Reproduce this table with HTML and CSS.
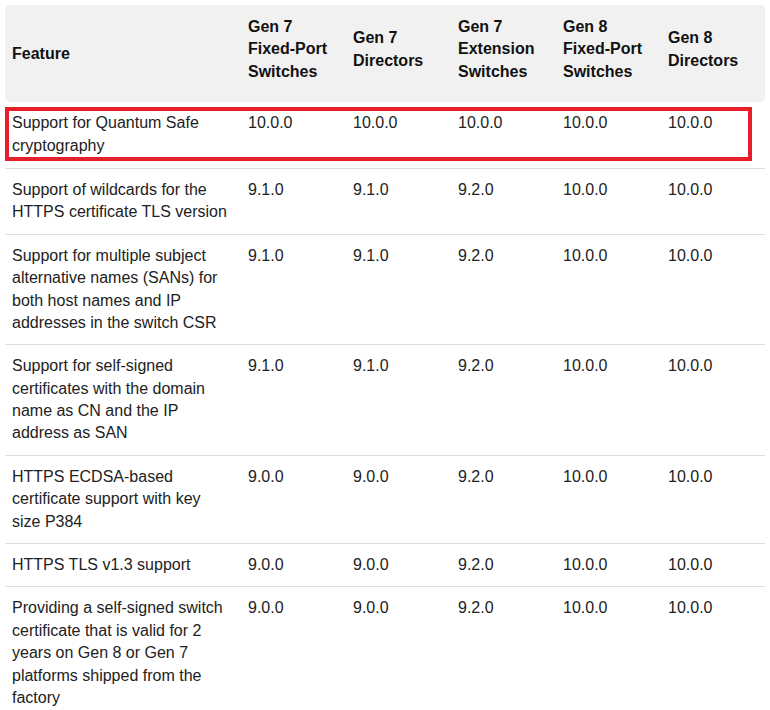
FILE: index.html
```html
<!DOCTYPE html>
<html>
<head>
<meta charset="utf-8">
<link rel="stylesheet" href="styles.css">
</head>
<body>
<div class="wrap">
<table class="tbl">
<colgroup>
<col class="c-feat"><col class="c-v"><col class="c-v"><col class="c-v"><col class="c-v"><col class="c-last">
</colgroup>
<thead>
<tr>
<th class="feat">Feature</th>
<th>Gen 7 Fixed-Port Switches</th>
<th>Gen 7 Directors</th>
<th>Gen 7 Extension Switches</th>
<th>Gen 8 Fixed-Port Switches</th>
<th>Gen 8 Directors</th>
</tr>
</thead>
<tbody>
<tr><td>Support for Quantum Safe cryptography</td><td>10.0.0</td><td>10.0.0</td><td>10.0.0</td><td>10.0.0</td><td>10.0.0</td></tr>
<tr><td>Support of wildcards for the HTTPS certificate TLS version</td><td>9.1.0</td><td>9.1.0</td><td>9.2.0</td><td>10.0.0</td><td>10.0.0</td></tr>
<tr><td>Support for multiple subject alternative names (SANs) for both host names and IP addresses in the switch CSR</td><td>9.1.0</td><td>9.1.0</td><td>9.2.0</td><td>10.0.0</td><td>10.0.0</td></tr>
<tr><td>Support for self-signed certificates with the domain name as CN and the IP address as SAN</td><td>9.1.0</td><td>9.1.0</td><td>9.2.0</td><td>10.0.0</td><td>10.0.0</td></tr>
<tr><td>HTTPS ECDSA-based certificate support with key size P384</td><td>9.0.0</td><td>9.0.0</td><td>9.2.0</td><td>10.0.0</td><td>10.0.0</td></tr>
<tr><td>HTTPS TLS v1.3 support</td><td>9.0.0</td><td>9.0.0</td><td>9.2.0</td><td>10.0.0</td><td>10.0.0</td></tr>
<tr><td>Providing a self-signed switch certificate that is valid for 2 years on Gen 8 or Gen 7 platforms shipped from the factory</td><td>9.0.0</td><td>9.0.0</td><td>9.2.0</td><td>10.0.0</td><td>10.0.0</td></tr>
</tbody>
</table>
<div class="highlight"></div>
</div>
</body>
</html>
```

FILE: styles.css
```css
html, body {
  margin: 0;
  padding: 0;
  background: #ffffff;
}
body {
  padding: 5px 5px 0 5px;
  font-family: "Liberation Sans", Arial, sans-serif;
  font-size: 16px;
  line-height: 1.4;
  color: #222222;
}
.wrap {
  position: relative;
}
.tbl {
  width: 760px;
  table-layout: fixed;
  border-collapse: separate;
  border-spacing: 0;
}
.c-feat { width: 236px; }
.c-v { width: 105px; }
.c-last { width: 104px; }
.tbl th {
  background: #f1f1f1;
  color: #111111;
  font-weight: bold;
  text-align: left;
  vertical-align: middle;
  padding: 11px 7px 19px 7px;
}
.tbl th:first-child { border-radius: 5px 0 0 5px; }
.tbl th:last-child { border-radius: 0 5px 5px 0; }
.tbl th.feat { padding-top: 21px; }
.tbl td {
  text-align: left;
  vertical-align: top;
  padding: 10px 7px 10px 7px;
  border-bottom: 1px solid #dddddd;
}
.tbl td:first-child { padding-right: 11px; }
.tbl tbody tr:first-child td { padding-top: 10px; padding-bottom: 11px; }
.highlight {
  position: absolute;
  left: 0;
  top: 102px;
  width: 739px;
  height: 46px;
  border: 4px solid #e5202b;
}
```
